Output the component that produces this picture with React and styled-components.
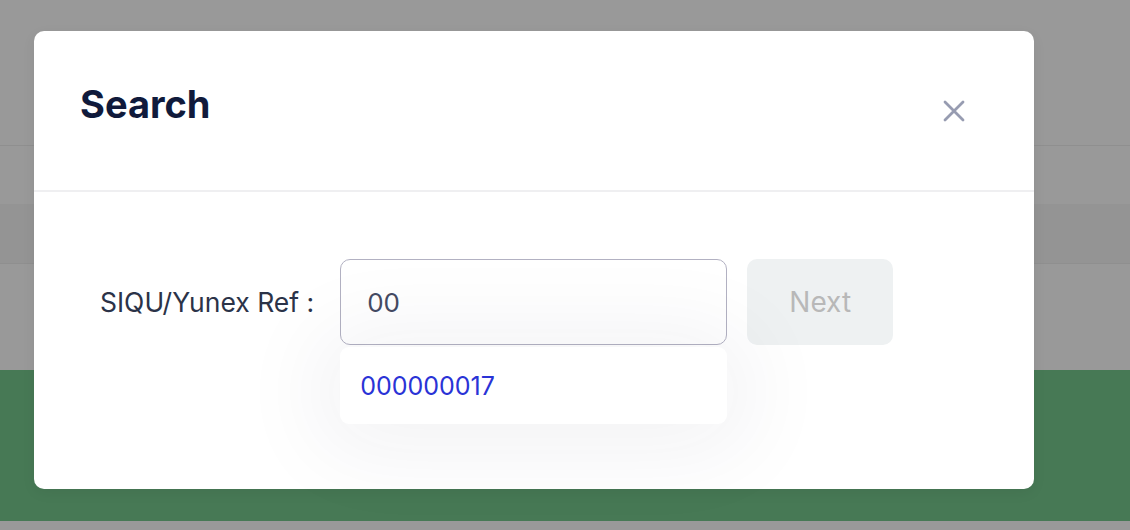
import React from "react"
import styled, { createGlobalStyle } from "styled-components"

const GlobalStyle = createGlobalStyle`
  html, body {
    margin: 0;
    padding: 0;
    background: #999999;
    font-family: Inter, "Noto Sans", sans-serif;
  }
`

const Page = styled.div`
  position: relative;
  width: 1130px;
  height: 530px;
  overflow: hidden;
  display: flex;
  flex-direction: column;
  background: #999999;
`

const Band = styled.div`
  height: ${p => p.h}px;
  flex: none;
  background: ${p => p.bg || "#999999"};
  border-bottom: ${p => (p.line ? "1px solid #8f8f8f" : "none")};
`

const Overlay = styled.div`
  position: absolute;
  inset: 0;
  padding: 31px 0 0 34px;
`

const Modal = styled.div`
  width: 1000px;
  height: 458px;
  background: #ffffff;
  border-radius: 10px;
  display: flex;
  flex-direction: column;
  box-shadow: 0 4px 14px rgba(0, 0, 0, 0.06);
`

const Header = styled.div`
  height: 161px;
  box-sizing: border-box;
  padding: 0 64px 0 46px;
  display: flex;
  align-items: center;
  justify-content: space-between;
  border-bottom: 2px solid #efeff1;
`

const Title = styled.h2`
  margin: -14px 0 0;
  font-size: 38px;
  font-weight: 700;
  color: #101a3b;
`

const CloseButton = styled.button`
  border: none;
  background: none;
  padding: 0;
  width: 32px;
  height: 32px;
  display: flex;
  align-items: center;
  justify-content: center;
  cursor: pointer;
`

const Body = styled.div`
  padding: 67px 0 0 66px;
`

const Row = styled.div`
  display: flex;
  align-items: center;
`

const Label = styled.label`
  font-size: 26.5px;
  color: #2b3348;
  margin-right: 26px;
`

const Field = styled.div`
  position: relative;
  width: 387px;
`

const Input = styled.input`
  width: 100%;
  height: 86px;
  box-sizing: border-box;
  border: 1.5px solid #b2b1c2;
  border-radius: 10px;
  background: transparent;
  padding: 0 26px;
  font-family: Inter, sans-serif;
  font-size: 26px;
  color: #454b63;
  outline: none;
`

const Dropdown = styled.ul`
  position: absolute;
  z-index: 2;
  left: 0;
  right: 0;
  top: 88px;
  height: 77px;
  margin: 0;
  padding: 0 20px;
  box-sizing: border-box;
  list-style: none;
  background: #ffffff;
  border-radius: 9px;
  display: flex;
  align-items: center;
  box-shadow: 0 6px 90px 20px rgba(30, 30, 60, 0.06);
`

const Option = styled.li`
  font-size: 25px;
  color: #2a33d6;
  cursor: pointer;
`

const NextButton = styled.button`
  margin-left: 20px;
  width: 146px;
  height: 86px;
  border: none;
  border-radius: 10px;
  background: #eef1f2;
  font-family: Inter, sans-serif;
  font-size: 28px;
  color: #b8b8b8;
`

function CloseIcon() {
  return (
    <svg width="22" height="22" viewBox="0 0 22 22" fill="none">
      <path d="M2 2 L20 20 M20 2 L2 20" stroke="#979cb1" strokeWidth="2.8" strokeLinecap="round" />
    </svg>
  )
}

export default function App() {
  return (
    <>
      <GlobalStyle />
      <Page>
        <Band h={145} line />
        <Band h={58} />
        <Band h={59} bg="#949494" line />
        <Band h={106} />
        <Band h={151} bg="#477955" />
        <Band h={10} />
        <Overlay>
          <Modal>
            <Header>
              <Title>Search</Title>
              <CloseButton aria-label="Close">
                <CloseIcon />
              </CloseButton>
            </Header>
            <Body>
              <Row>
                <Label>SIQU/Yunex Ref :</Label>
                <Field>
                  <Input defaultValue="00" />
                  <Dropdown>
                    <Option>000000017</Option>
                  </Dropdown>
                </Field>
                <NextButton disabled>Next</NextButton>
              </Row>
            </Body>
          </Modal>
        </Overlay>
      </Page>
    </>
  )
}
